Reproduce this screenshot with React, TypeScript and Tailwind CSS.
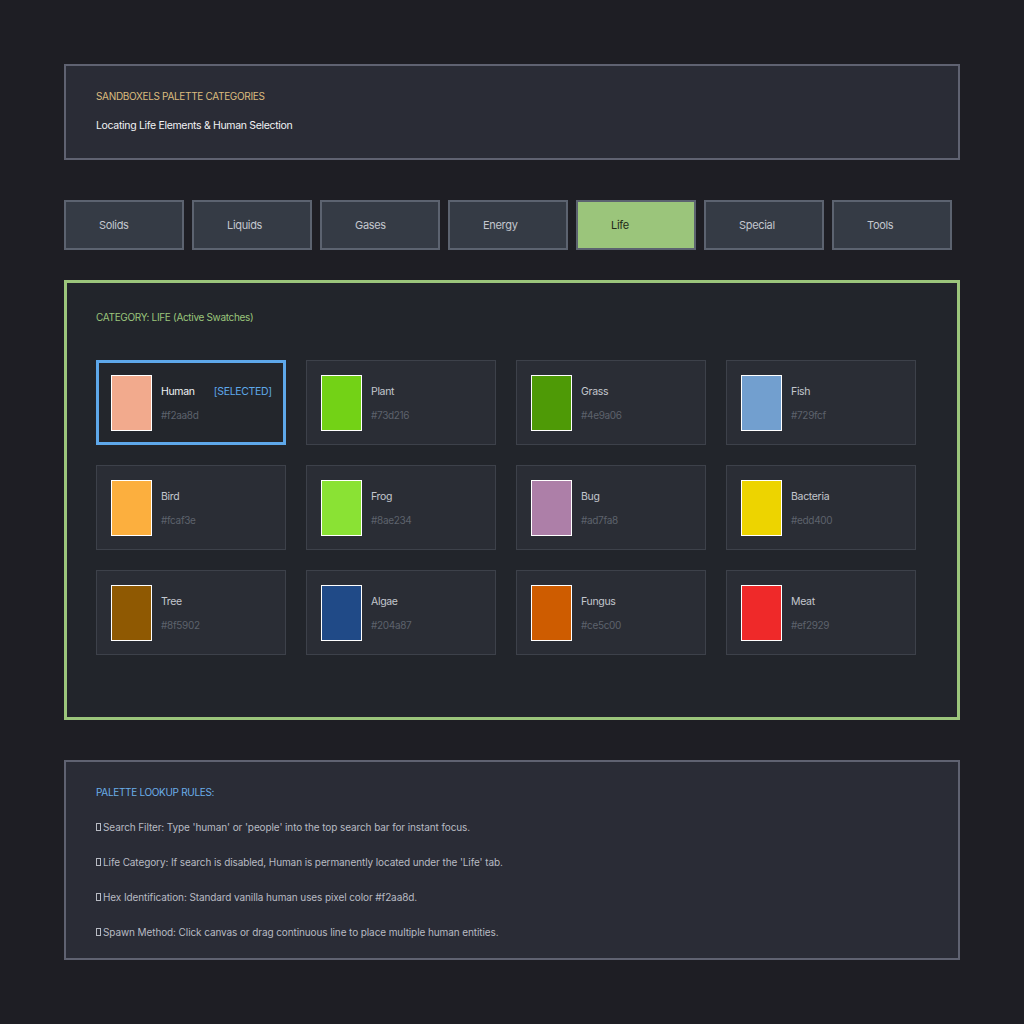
const TABS = ["Solids", "Liquids", "Gases", "Energy", "Life", "Special", "Tools"];

const SWATCHES = [
  { name: "Human", hex: "#f2aa8d", selected: true },
  { name: "Plant", hex: "#73d216" },
  { name: "Grass", hex: "#4e9a06" },
  { name: "Fish", hex: "#729fcf" },
  { name: "Bird", hex: "#fcaf3e" },
  { name: "Frog", hex: "#8ae234" },
  { name: "Bug", hex: "#ad7fa8" },
  { name: "Bacteria", hex: "#edd400" },
  { name: "Tree", hex: "#8f5902" },
  { name: "Algae", hex: "#204a87" },
  { name: "Fungus", hex: "#ce5c00" },
  { name: "Meat", hex: "#ef2929" },
];

const RULES = [
  "Search Filter: Type 'human' or 'people' into the top search bar for instant focus.",
  "Life Category: If search is disabled, Human is permanently located under the 'Life' tab.",
  "Hex Identification: Standard vanilla human uses pixel color #f2aa8d.",
  "Spawn Method: Click canvas or drag continuous line to place multiple human entities.",
];

function Swatch({ name, hex, selected }: { name: string; hex: string; selected?: boolean }) {
  return (
    <div
      className={`box-border flex h-[85px] items-start gap-[9px] ${
        selected ? "border-[3px] border-[#5ea8ea] bg-[#23262c] p-[12px]" : "border border-[#3d414a] bg-[#2a2d35] p-[14px]"
      }`}
    >
      <div className="h-[56px] w-[41px] shrink-0 border border-white" style={{ backgroundColor: hex }} />
      <div className="flex flex-col pt-[9px]">
        <div className="flex items-center text-[10.5px] leading-[16px]">
          <span className={selected ? "text-[#f0f2f5]" : "text-[#c3c7ce]"}>{name}</span>
          {selected && <span className="ml-[19px] text-[#5ea8ea]">[SELECTED]</span>}
        </div>
        <span className="mt-[7px] text-[10px] leading-[16px] text-[#5d626c]">{hex}</span>
      </div>
    </div>
  );
}

export default function App() {
  return (
    <div className="min-h-[1024px] w-full bg-[#1e1e24] px-[64px] pt-[64px] font-['Inter','Liberation_Sans',sans-serif] tracking-[-0.02em]">
      <div className="box-border flex h-[96px] w-[896px] flex-col border-2 border-[#5f6271] bg-[#2a2c36] pl-[30px] pt-[24px]">
        <div className="text-[10px] leading-[12px] text-[#dcbc7e]">SANDBOXELS PALETTE CATEGORIES</div>
        <div className="mt-[17px] text-[10.5px] leading-[14px] text-[#f2f3f5]">Locating Life Elements &amp; Human Selection</div>
      </div>

      <div className="mt-[40px] flex gap-[8px]">
        {TABS.map((t) => (
          <div
            key={t}
            className={`box-border flex h-[50px] w-[120px] items-center border-2 pl-[33px] text-[11px] ${
              t === "Life" ? "border-[#5c6370] bg-[#9bc57b] text-[#1f2a18]" : "border-[#5c6370] bg-[#353b45] text-[#c3c7ce]"
            }`}
          >
            {t}
          </div>
        ))}
      </div>

      <div className="mt-[30px] box-border h-[440px] w-[896px] border-[3px] border-[#9bc57b] bg-[#22252b] pl-[29px] pt-[28px]">
        <div className="text-[10px] leading-[12px] text-[#9bc57b]">CATEGORY: LIFE (Active Swatches)</div>
        <div className="mt-[37px] grid w-[820px] grid-cols-4 gap-[20px]">
          {SWATCHES.map((s) => (
            <Swatch key={s.name} {...s} />
          ))}
        </div>
      </div>

      <div className="mt-[40px] box-border h-[200px] w-[896px] border-2 border-[#5f6271] bg-[#2a2c36] pl-[30px] pt-[24px]">
        <div className="text-[10px] leading-[12px] text-[#6aaee8]">PALETTE LOOKUP RULES:</div>
        <div className="mt-[23px] flex flex-col gap-[23px]">
          {RULES.map((r) => (
            <div key={r} className="flex items-center text-[10px] leading-[12px] tracking-[-0.01em] text-[#b8bbc3]">
              <span className="mr-[2px] inline-block h-[8px] w-[5px] border border-[#b8bbc3]" />
              {r}
            </div>
          ))}
        </div>
      </div>
    </div>
  );
}
